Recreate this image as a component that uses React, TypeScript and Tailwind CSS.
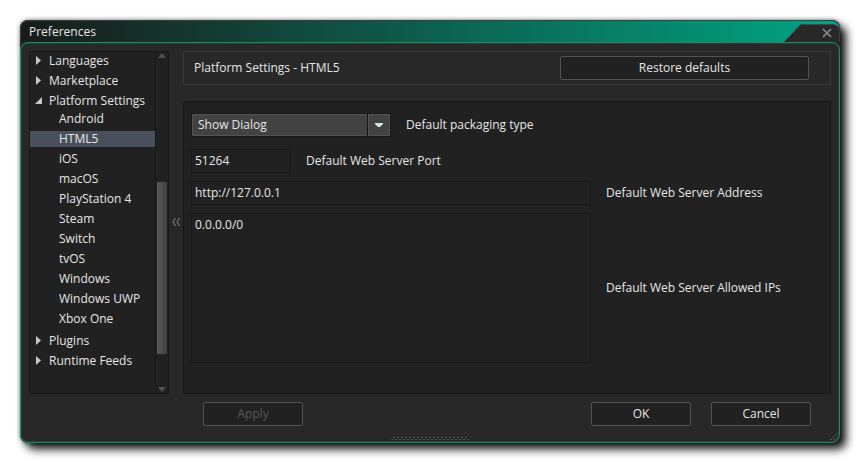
import { useState } from "react";

type Row = { name: string; open?: boolean; children?: string[] };

const tree: Row[] = [
  { name: "Languages" },
  { name: "Marketplace" },
  {
    name: "Platform Settings",
    open: true,
    children: [
      "Android",
      "HTML5",
      "iOS",
      "macOS",
      "PlayStation 4",
      "Steam",
      "Switch",
      "tvOS",
      "Windows",
      "Windows UWP",
      "Xbox One",
    ],
  },
  { name: "Plugins" },
  { name: "Runtime Feeds" },
];

function TitleBar() {
  return (
    <header className="flex h-[22px] items-stretch justify-between rounded-t-lg border-x border-t border-[#3c3f3e] bg-linear-to-r/srgb from-[#191b1a] to-[#00a483]">
      <h1 className="pl-2 leading-[22px]">Preferences</h1>
      <div className="flex pt-[3px]">
        <svg className="h-[18px] w-[19px]" viewBox="0 0 19 18" aria-hidden="true">
          <path d="M0 18L17 0h2v18z" fill="#282828" />
          <path d="M0 18L17 0.5h2" fill="none" stroke="#3c4a47" />
        </svg>
        <button
          type="button"
          aria-label="Close"
          className="flex w-9 items-center justify-end rounded-tr-md border-t border-[#3c4a47] bg-[#282828] pr-[7px] pb-px"
        >
          <svg className="size-[10px]" viewBox="0 0 10 10" aria-hidden="true">
            <path d="M1 1l8 8M9 1l-8 8" stroke="#8b909b" strokeWidth="1.5" />
          </svg>
        </button>
      </div>
    </header>
  );
}

function TreePanel() {
  const [selected, setSelected] = useState("HTML5");
  return (
    <nav
      aria-label="Preference pages"
      className="flex w-[140px] shrink-0 rounded-xs border border-[#171717] bg-[#212121]"
    >
      <ul className="min-w-0 flex-1 border-r border-[#171717]">
        {tree.map((row) => (
          <li key={row.name} className="whitespace-nowrap">
            <button
              type="button"
              aria-expanded={!!row.open}
              className="flex h-5 w-full items-center pb-[3px] text-left leading-4"
            >
              <svg className="mr-[6px] ml-[5px] h-[9px] w-2 shrink-0" viewBox="0 0 8 9" aria-hidden="true">
                {row.open ? <path d="M7 1v7H0z" fill="#c8c8c8" /> : <path d="M1 0v9L6 4.500z" fill="#c8c8c8" />}
              </svg>
              {row.name}
            </button>
            {row.children && (
              <ul className="-mt-[3px] pb-[3px]">
                {row.children.map((name) => (
                  <li key={name} className="flex h-5 items-center">
                    <button
                      type="button"
                      onClick={() => setSelected(name)}
                      className={
                        name === selected
                          ? "h-4 w-full bg-[#4a505b] pl-[29px] text-left leading-4"
                          : "h-4 w-full pl-[29px] text-left leading-4"
                      }
                    >
                      {name}
                    </button>
                  </li>
                ))}
              </ul>
            )}
          </li>
        ))}
      </ul>
      <div className="flex w-3 flex-col items-center justify-between py-px">
        <svg className="h-[5px] w-2" viewBox="0 0 8 5" aria-hidden="true">
          <path d="M4 0l4 5H0z" fill="#505050" />
        </svg>
        <div className="mt-auto mb-[33px] h-[172px] w-[10px] bg-linear-to-r from-[#5a5a5a] to-[#404040]" />
        <svg className="h-[5px] w-2" viewBox="0 0 8 5" aria-hidden="true">
          <path d="M0 0h8L4 5z" fill="#505050" />
        </svg>
      </div>
    </nav>
  );
}

const field = "block w-full resize-none rounded-xs border border-[#171717] bg-[#212121] px-[3px] outline-none";
const button = "h-6 rounded-xs border border-[#535353] bg-[#212121] text-center";

function SettingsPanel() {
  return (
    <main className="flex min-w-0 flex-1 flex-col gap-4">
      <div className="flex h-[34px] items-center justify-between rounded-xs border border-[#3a3a3a] pr-[21px] pl-[10px]">
        <h2>Platform Settings - HTML5</h2>
        <button type="button" className={`${button} w-[249px]`}>
          Restore defaults
        </button>
      </div>
      <form className="flex flex-col gap-2 rounded-xs border border-[#171717] bg-[#212121] px-[7px] pt-[11px] pb-[30px]">
        <div className="mb-1 flex items-center gap-[15px]">
          <div className="relative w-[200px]">
            <select
              id="packaging"
              className="block h-6 w-full appearance-none rounded-xs border border-[#171717] bg-[#424242] pl-[6px] inset-ring inset-ring-[#535353] outline-none"
            >
              <option>Show Dialog</option>
            </select>
            <span className="pointer-events-none absolute inset-y-px right-px flex w-[22px] items-center justify-center border border-[#535353] bg-[#424242] outline outline-[#171717]">
              <svg className="h-1 w-2" viewBox="0 0 8 4" aria-hidden="true">
                <path d="M0 0h8v1L5 4H3L0 1z" fill="#d6e6e6" />
              </svg>
            </span>
          </div>
          <label htmlFor="packaging">Default packaging type</label>
        </div>
        <div className="flex items-center gap-[15px]">
          <div className="w-[100px]">
            <input id="port" defaultValue="51264" className={`${field} h-6 pb-px`} />
          </div>
          <label htmlFor="port">Default Web Server Port</label>
        </div>
        <div className="flex items-center gap-[15px]">
          <div className="w-[400px]">
            <input id="address" defaultValue="http://127.0.0.1" className={`${field} h-6 pb-px`} />
          </div>
          <label htmlFor="address">Default Web Server Address</label>
        </div>
        <div className="flex items-center gap-[15px]">
          <div className="w-[400px]">
            <textarea id="ips" defaultValue="0.0.0.0/0" className={`${field} h-[150px] pt-px`} />
          </div>
          <label htmlFor="ips">Default Web Server Allowed IPs</label>
        </div>
      </form>
    </main>
  );
}

function BottomGrip() {
  return (
    <svg className="h-[3px] w-[78px]" viewBox="0 0 78 3" shapeRendering="crispEdges" aria-hidden="true">
      <path d="M2 0.5h76" stroke="#565656" strokeDasharray="2 2" />
      <path d="M0 1.5h78" stroke="#1a1a1a" strokeDasharray="2 2" />
      <path d="M0 2.5h78" stroke="#565656" strokeDasharray="2 2" />
    </svg>
  );
}

function CornerGrip() {
  return (
    <svg className="absolute right-px bottom-px size-2" viewBox="0 0 8 8" shapeRendering="crispEdges" aria-hidden="true">
      <path
        d="M6 0h2v1H6zM4 2h2v1H4zM7 3h1v1H7zM2 4h2v1H2zM5 5h2v1H5zM0 6h2v1H0zM3 6h2v1H3z"
        fill="#505050"
      />
    </svg>
  );
}

export default function App() {
  return (
    <div className="bg-white p-5 font-['Open_Sans',sans-serif] text-[12px] leading-5 text-[#e6e6e6]">
      <div className="rounded-lg bg-[#282828] shadow-[6px_6px_10px_0_rgba(0,0,0,0.95),0_0_4px_rgba(0,0,0,0.5)]">
        <TitleBar />
        <div className="relative rounded-lg border border-[#009c5e] bg-[#282828] px-2 pt-2 inset-ring inset-ring-[#3a3636]">
          <div className="flex">
            <TreePanel />
            <button type="button" aria-label="Collapse page list" className="flex w-[14px] items-center justify-center pr-px pb-px">
              <svg className="h-[10px] w-2" viewBox="0 0 8 10" fill="none" stroke="#8a8a8a" aria-hidden="true">
                <path d="M3.500 1L1 5l2.500 4M7.500 1L5 5l2.500 4" />
              </svg>
            </button>
            <SettingsPanel />
          </div>
          <footer className="flex pt-2 pr-5 pl-[174px]">
            <button type="button" disabled className={`${button} w-[100px] text-[#585858]`}>
              Apply
            </button>
            <button type="button" className={`${button} ml-auto w-[100px]`}>
              OK
            </button>
            <button type="button" className={`${button} ml-5 w-[100px]`}>
              Cancel
            </button>
          </footer>
          <div className="flex justify-center pt-[11px] pb-[2px]">
            <BottomGrip />
          </div>
          <CornerGrip />
        </div>
      </div>
    </div>
  );
}
